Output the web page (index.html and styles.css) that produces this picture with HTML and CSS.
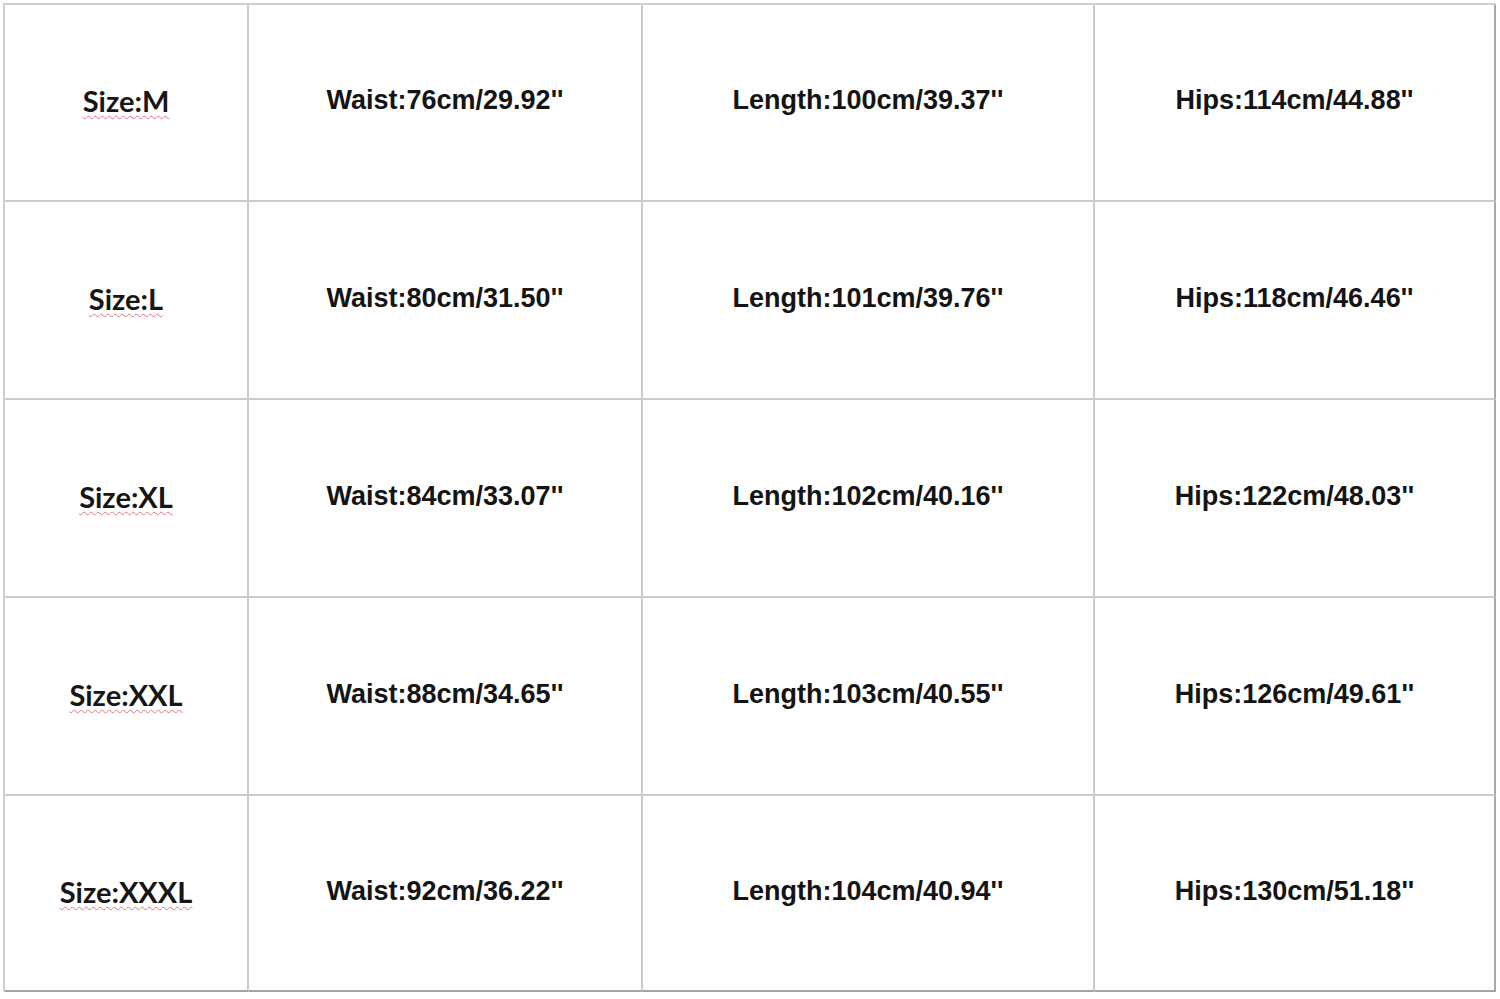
FILE: index.html
```html
<!DOCTYPE html>
<html>
<head>
<meta charset="utf-8">
<link rel="stylesheet" href="styles.css">
</head>
<body>
<div class="chart">
  <div class="cell size"><span class="spell">Size:M</span></div>
  <div class="cell">Waist:76cm/29.92''</div>
  <div class="cell">Length:100cm/39.37''</div>
  <div class="cell">Hips:114cm/44.88''</div>

  <div class="cell size"><span class="spell">Size:L</span></div>
  <div class="cell">Waist:80cm/31.50''</div>
  <div class="cell">Length:101cm/39.76''</div>
  <div class="cell">Hips:118cm/46.46''</div>

  <div class="cell size"><span class="spell">Size:XL</span></div>
  <div class="cell">Waist:84cm/33.07''</div>
  <div class="cell">Length:102cm/40.16''</div>
  <div class="cell">Hips:122cm/48.03''</div>

  <div class="cell size"><span class="spell">Size:XXL</span></div>
  <div class="cell">Waist:88cm/34.65''</div>
  <div class="cell">Length:103cm/40.55''</div>
  <div class="cell">Hips:126cm/49.61''</div>

  <div class="cell size"><span class="spell">Size:XXXL</span></div>
  <div class="cell">Waist:92cm/36.22''</div>
  <div class="cell">Length:104cm/40.94''</div>
  <div class="cell">Hips:130cm/51.18''</div>
</div>
</body>
</html>
```
FILE: styles.css
```css
html, body {
  margin: 0;
  padding: 0;
  background: #ffffff;
}

.chart {
  margin: 3px 0 0 3px;
  width: 1491px;
  display: grid;
  grid-template-columns: 244px 394px 452px 401px;
  grid-template-rows: 197px 198px 198px 198px 196px;
  border-top: 2px solid #cfcfcf;
  border-left: 2px solid #cfcfcf;
  box-sizing: content-box;
}

.cell {
  display: flex;
  align-items: center;
  justify-content: center;
  border-right: 2px solid #cbcbcb;
  border-bottom: 2px solid #cbcbcb;
  padding-bottom: 4px;
  box-sizing: border-box;
  font-family: "Liberation Sans", Arial, sans-serif;
  font-weight: 700;
  font-size: 27px;
  color: #141414;
  white-space: nowrap;
}

.cell:nth-child(4n) {
  border-right-color: #a8a8a8;
}

.cell:nth-child(n+17) {
  border-bottom-color: #a4a4a4;
}

.size {
  font-family: Lato, "Liberation Sans", sans-serif;
  font-size: 29px;
  color: #161616;
}

.spell {
  text-decoration-line: underline;
  text-decoration-style: wavy;
  text-decoration-color: #d9777f;
  text-decoration-thickness: 1px;
  text-underline-offset: 3px;
}
```
